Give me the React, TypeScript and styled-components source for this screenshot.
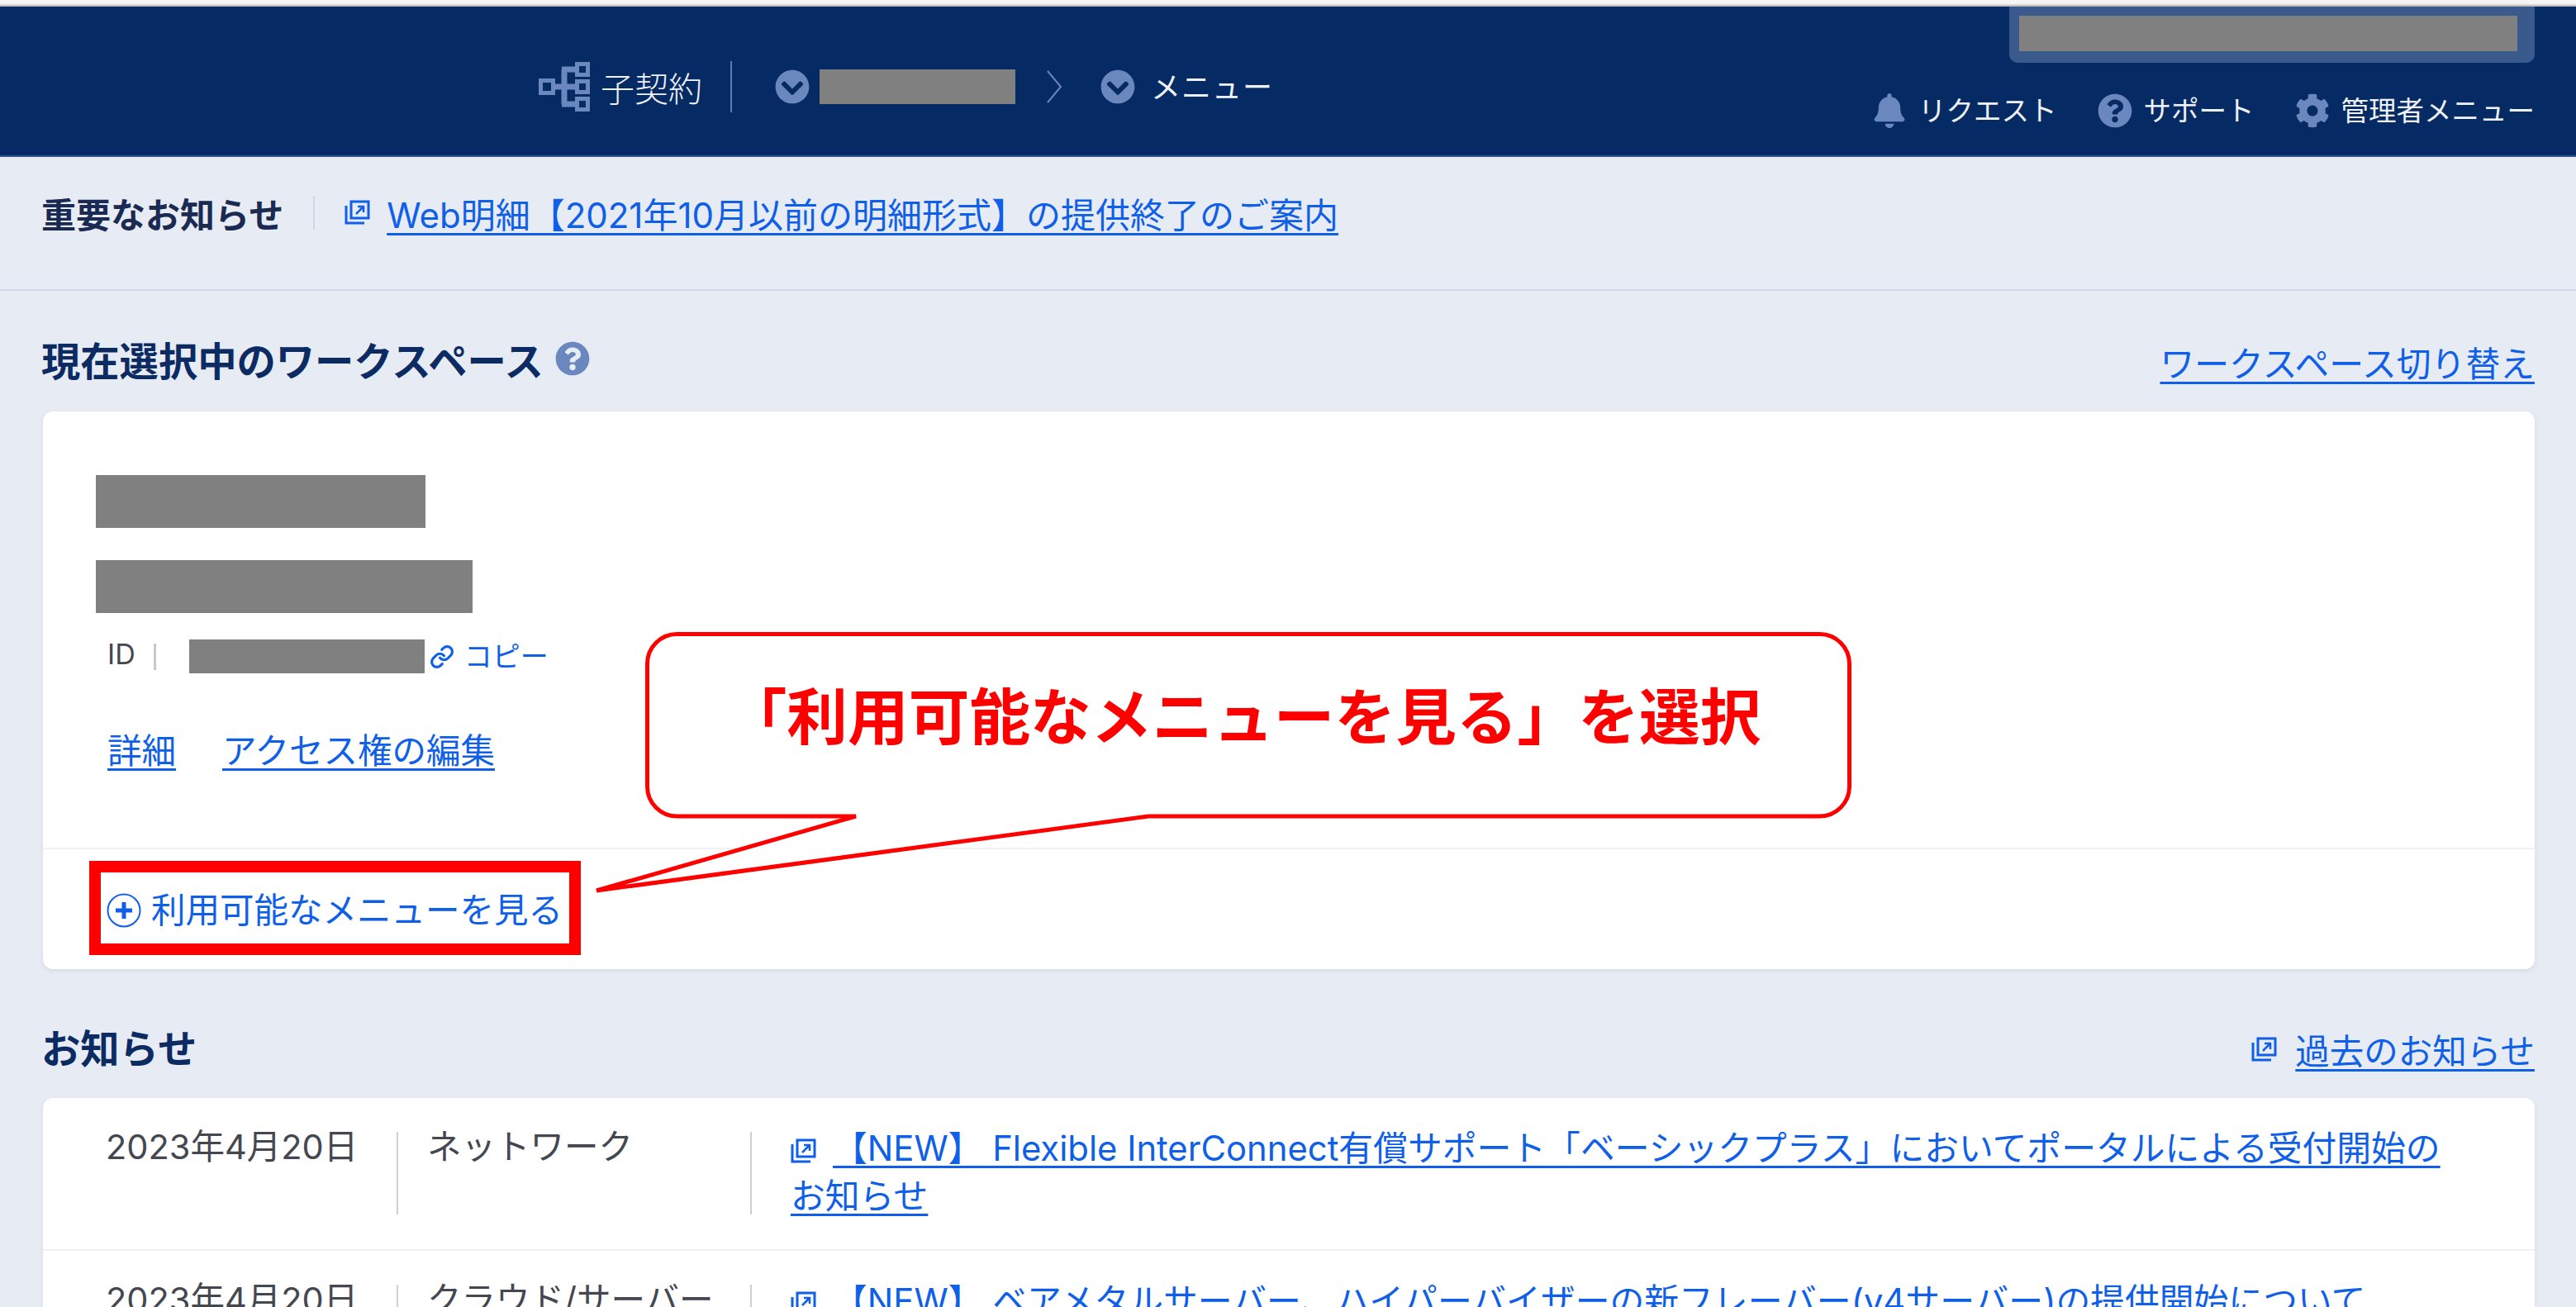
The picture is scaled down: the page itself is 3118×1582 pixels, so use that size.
import React from 'react'
import styled, { createGlobalStyle } from 'styled-components'
import { FaBell, FaCog, FaQuestionCircle, FaChevronCircleDown } from 'react-icons/fa'
import { Link as LinkIcon } from 'lucide-react'

const Global = createGlobalStyle`
    html, body {
        margin: 0;
        background: #e7ebf4;
    }
    * {
        box-sizing: border-box;
    }
`

const Page = styled.div`
    position: relative;
    width: 3118px;
    height: 1582px;
    overflow: hidden;
    background: #e7ebf4;
    font-family: Inter, "Noto Sans CJK JP", "Noto Sans", sans-serif;
    font-size: 41.5px;
    color: #44474f;
`
const TopStrip = styled.div`
    height: 8px;
    background: linear-gradient(#f4f4f4 55%, #a9a9a9);
`
const Header = styled.header`
    display: flex;
    justify-content: space-between;
    height: 182px;
    padding: 0 50px 0 652px;
    background: #062a63;
    border-bottom: 2px solid #2f5597;
    color: #eef1f7;
`
const Crumbs = styled.nav`
    display: flex;
    align-items: center;
    height: 180px;
    padding-top: 14px;
`
const CrumbTitle = styled.span`
    margin-left: 13px;
    font-size: 41px;
    font-weight: 300;
`
const CrumbDivider = styled.span`
    width: 2px;
    height: 62px;
    margin: 0 52px 0 34px;
    background: #5f7cad;
`
const CrumbLabel = styled.span`
    margin: -5px 0 0 19px;
    font-size: 36px;
    letter-spacing: 1px;
`
const Redact = styled.div<{ $w: number; $h: number }>`
    flex: none;
    width: ${p => p.$w}px;
    height: ${p => p.$h}px;
    background: #808080;
`
const CrumbRedact = styled(Redact)`
    margin-left: 12px;
`
const CrumbArrow = styled.svg`
    width: 20px;
    height: 40px;
    margin: 0 46px 0 37px;
`
const HeaderRight = styled.div`
    display: flex;
    flex-direction: column;
    align-items: flex-end;
`
const AccountTab = styled.div`
    width: 636px;
    height: 68px;
    padding: 11px 0 0 12px;
    background: #3a5a8e;
    border-radius: 0 0 10px 10px;
`
const Utilities = styled.div`
    display: flex;
    align-items: center;
    gap: 49px;
    margin-top: 37px;
`
const Utility = styled.span`
    display: flex;
    align-items: center;
    gap: 14px;
    font-size: 33.5px;
    line-height: 42px;
    color: #eef1f7;
    svg {
        flex: none;
        color: #6a88bd;
        font-size: 42px;
    }
`

const ImportantBar = styled.div`
    display: flex;
    align-items: center;
    height: 162px;
    padding: 0 0 26px 50px;
    border-bottom: 2px solid #cfd7e6;
`
const ImportantTitle = styled.strong`
    font-size: 42px;
    font-weight: 700;
    color: #1a2a52;
`
const ImportantDivider = styled.span`
    width: 2px;
    height: 41px;
    margin: 0 36px;
    background: #cfd7e6;
`
const TextLink = styled.a`
    color: #0f5fe8;
    text-decoration: underline;
    text-decoration-thickness: 3px;
    text-underline-offset: 6px;
`
const ImportantLink = styled(TextLink)`
    margin-left: 20px;
    font-size: 42px;
`
const SwitchLink = styled(TextLink)`
    font-size: 41.8px;
`

const Section = styled.section<{ $top: number }>`
    margin: ${p => p.$top}px 50px 0 52px;
`
const SectionHead = styled.div`
    display: flex;
    align-items: center;
    justify-content: space-between;
    height: 60px;
`
const SectionTitle = styled.h2`
    display: flex;
    align-items: center;
    gap: 14px;
    margin: 0 0 8px -2px;
    font-size: 47.3px;
    font-weight: 700;
    color: #0d2b63;
    svg {
        color: #6a88bd;
        font-size: 42px;
    }
`
const HeadLink = styled.span`
    display: flex;
    align-items: center;
    gap: 22px;
`
const Card = styled.div<{ $top: number }>`
    margin-top: ${p => p.$top}px;
    background: #fff;
    border-radius: 12px;
    box-shadow: 0 2px 5px rgba(80, 95, 135, 0.12);
`
const WorkspaceInfo = styled.div`
    height: 530px;
    padding: 77px 64px 0;
    border-bottom: 2px solid #eef1f6;
`
const NameRedact = styled(Redact)`
    margin-bottom: 39px;
`
const IdRow = styled.div`
    display: flex;
    align-items: center;
    height: 41px;
    margin-top: -7px;
    padding-left: 14px;
    font-size: 34px;
`
const IdLabel = styled.span`
    margin-top: -6px;
`
const IdDivider = styled.span`
    width: 3px;
    height: 32px;
    margin: 0 40px 0 22px;
    background: #c8c8c8;
`
const CopyLink = styled.span`
    display: flex;
    align-items: center;
    margin: -5px 0 0 6px;
    color: #0f5fe8;
    svg {
        margin: 5px 12px 0 0;
    }
`
const DetailLinks = styled.div`
    display: flex;
    gap: 56px;
    margin-top: 64px;
    padding-left: 14px;
    line-height: 60px;
`
const WorkspaceFoot = styled.div`
    display: flex;
    align-items: center;
    height: 145px;
    padding: 3px 0 0 77px;
    color: #0f5fe8;
    gap: 12px;
`
const FootLabel = styled.span`
    margin-top: -6px;
`
const PlusIcon = styled.svg`
    flex: none;
    width: 42px;
    height: 42px;
`
const ExternalGlyph = styled.svg`
    flex: none;
    width: 31px;
    height: 30px;
`

const NoticeRow = styled.div`
    display: grid;
    grid-template-columns: 428px 428px 1fr;
    align-items: start;
    padding: 41px 0 42px;
    border-bottom: 2px solid #eef1f6;
    line-height: 36px;
`
const NoticeDate = styled.div`
    height: 100px;
    padding-left: 76px;
`
const NoticeCategory = styled.div`
    height: 100px;
    padding-left: 35px;
    border-left: 2px solid #cfcfcf;
`
const NoticeBody = styled.div`
    height: 100px;
    padding-left: 47px;
    border-left: 2px solid #cfcfcf;
`
const NoticeText = styled.div`
    margin-top: -9px;
    font-size: 41.8px;
    line-height: 58px;
    white-space: nowrap;
    svg {
        margin-right: 20px;
        vertical-align: -3px;
    }
`

const RedBox = styled.div`
    position: absolute;
    left: 108px;
    top: 1042px;
    width: 595px;
    height: 114px;
    border: 14px solid #ff0000;
`
const Callout = styled.div`
    position: absolute;
    left: 710px;
    top: 760px;
    width: 1540px;
    height: 330px;
`
const CalloutShape = styled.svg`
    display: block;
    width: 1540px;
    height: 330px;
`
const CalloutText = styled.div`
    position: absolute;
    left: 72px;
    top: 0;
    width: 1446px;
    padding-top: 54px;
    text-align: center;
    font-size: 73.7px;
    line-height: 110px;
    font-weight: 700;
    color: #ff0000;
    white-space: nowrap;
`

const TreeIcon = () => (
    <svg width="62" height="62" viewBox="0 0 62 62" fill="none" stroke="#6a88bd" strokeWidth="5">
        <rect x="2.5" y="23.5" width="15" height="15" />
        <rect x="46.5" y="3.5" width="13" height="13" />
        <rect x="46.5" y="24.5" width="13" height="13" />
        <rect x="46.5" y="45.5" width="13" height="13" />
        <path d="M18 31H46M31 10V52M28 10H46M28 52H46" strokeWidth="7" />
    </svg>
)

const ExternalIcon = () => (
    <ExternalGlyph viewBox="0 0 31 30" fill="none" stroke="#0f5fe8" strokeWidth="3">
        <rect x="8" y="2" width="21" height="20" />
        <path d="M2 7V28H24" />
        <path d="M14 17L22 9M16 8H23V15" strokeWidth="2.5" />
    </ExternalGlyph>
)

const App: React.FC = () => {
    return (
        <Page>
            <Global />
            <TopStrip />
            <Header>
                <Crumbs>
                    <TreeIcon />
                    <CrumbTitle>子契約</CrumbTitle>
                    <CrumbDivider />
                    <FaChevronCircleDown color="#6a88bd" size={42} />
                    <CrumbRedact $w={237} $h={42} />
                    <CrumbArrow viewBox="0 0 20 40" fill="none" stroke="#6a88bd" strokeWidth="2">
                        <path d="M2 1L18 20L2 39" />
                    </CrumbArrow>
                    <FaChevronCircleDown color="#6a88bd" size={42} />
                    <CrumbLabel>メニュー</CrumbLabel>
                </Crumbs>
                <HeaderRight>
                    <AccountTab>
                        <Redact $w={603} $h={43} />
                    </AccountTab>
                    <Utilities>
                        <Utility><FaBell />リクエスト</Utility>
                        <Utility><FaQuestionCircle />サポート</Utility>
                        <Utility><FaCog />管理者メニュー</Utility>
                    </Utilities>
                </HeaderRight>
            </Header>

            <ImportantBar>
                <ImportantTitle>重要なお知らせ</ImportantTitle>
                <ImportantDivider />
                <ExternalIcon />
                <ImportantLink>Web明細【2021年10月以前の明細形式】の提供終了のご案内</ImportantLink>
            </ImportantBar>

            <Section $top={56}>
                <SectionHead>
                    <SectionTitle>現在選択中のワークスペース<FaQuestionCircle /></SectionTitle>
                    <SwitchLink>ワークスペース切り替え</SwitchLink>
                </SectionHead>
                <Card $top={30}>
                    <WorkspaceInfo>
                        <NameRedact $w={399} $h={64} />
                        <NameRedact $w={456} $h={64} />
                        <IdRow>
                            <IdLabel>ID</IdLabel>
                            <IdDivider />
                            <Redact $w={285} $h={41} />
                            <CopyLink><LinkIcon size={30} strokeWidth={2.5} />コピー</CopyLink>
                        </IdRow>
                        <DetailLinks>
                            <TextLink>詳細</TextLink>
                            <TextLink>アクセス権の編集</TextLink>
                        </DetailLinks>
                    </WorkspaceInfo>
                    <WorkspaceFoot>
                        <PlusIcon viewBox="0 0 42 42" fill="none" stroke="#0f5fe8">
                            <circle cx="21" cy="21" r="19.5" strokeWidth="2" />
                            <path d="M21 11V31M11 21H31" strokeWidth="5" />
                        </PlusIcon>
                        <FootLabel>利用可能なメニューを見る</FootLabel>
                    </WorkspaceFoot>
                </Card>
            </Section>

            <Section $top={67}>
                <SectionHead>
                    <SectionTitle>お知らせ</SectionTitle>
                    <HeadLink>
                        <ExternalIcon />
                        <TextLink>過去のお知らせ</TextLink>
                    </HeadLink>
                </SectionHead>
                <Card $top={29}>
                    <NoticeRow>
                        <NoticeDate>2023年4月20日</NoticeDate>
                        <NoticeCategory>ネットワーク</NoticeCategory>
                        <NoticeBody>
                            <NoticeText>
                                <ExternalIcon />
                                <TextLink>【NEW】 Flexible InterConnect有償サポート「ベーシックプラス」においてポータルによる受付開始の<br />お知らせ</TextLink>
                            </NoticeText>
                        </NoticeBody>
                    </NoticeRow>
                    <NoticeRow>
                        <NoticeDate>2023年4月20日</NoticeDate>
                        <NoticeCategory>クラウド/サーバー</NoticeCategory>
                        <NoticeBody>
                            <NoticeText>
                                <ExternalIcon />
                                <TextLink>【NEW】 ベアメタルサーバー、ハイパーバイザーの新フレーバー(v4サーバー)の提供開始について</TextLink>
                            </NoticeText>
                        </NoticeBody>
                    </NoticeRow>
                </Card>
            </Section>

            <RedBox />
            <Callout>
                <CalloutShape viewBox="0 0 1540 330" fill="#fff" stroke="#ff0000" strokeWidth="5">
                    <path d="M109.5 7.5H1492.5A36 36 0 0 1 1528.5 43.5V192A36 36 0 0 1 1492.5 228H680L12 318L326 228H109.5A36 36 0 0 1 73.5 192V43.5A36 36 0 0 1 109.5 7.5Z" />
                </CalloutShape>
                <CalloutText>「利用可能なメニューを見る」を選択</CalloutText>
            </Callout>
        </Page>
    )
}

export default App
